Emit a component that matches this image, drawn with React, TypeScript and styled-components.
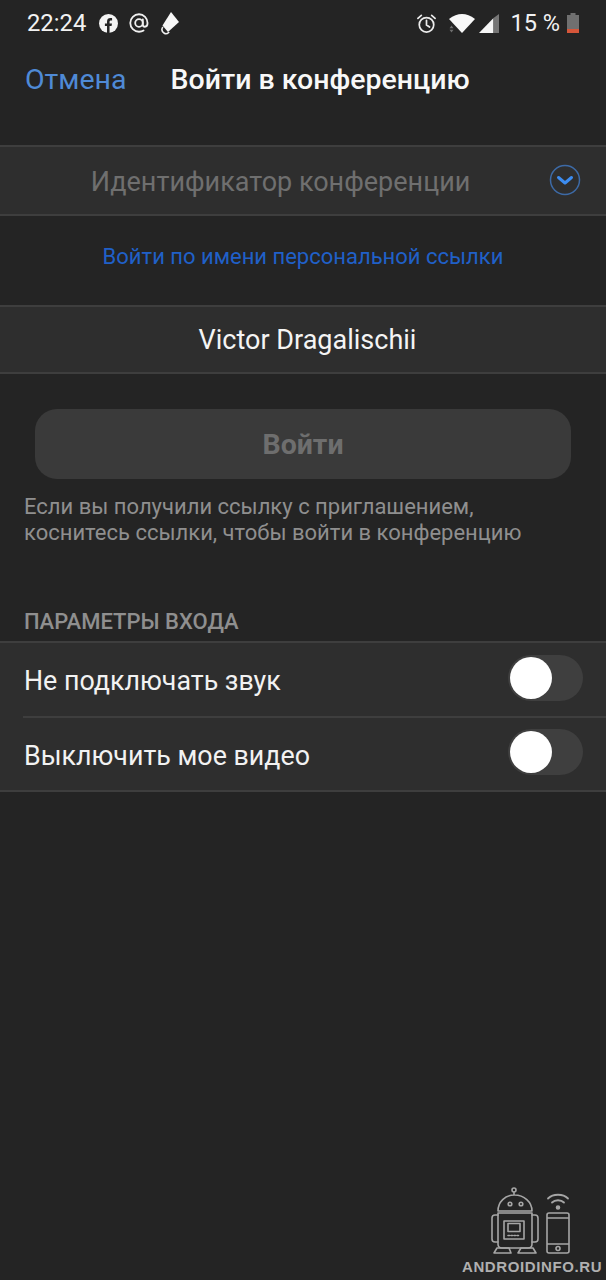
import styled, { createGlobalStyle } from "styled-components";

const GlobalStyle = createGlobalStyle`
  html, body {
    margin: 0;
    padding: 0;
    background: #242424;
  }
  * {
    box-sizing: border-box;
  }
`;

export default function App() {
  return (
    <Screen>
      <GlobalStyle />
      <StatusBar>
        <StatusLeft>
          <Clock>22:24</Clock>
          <svg width="19" height="19" viewBox="0 0 18 18">
            <circle cx="9" cy="9" r="9" fill="#f4f4f4" />
            <path d="M7.6 18v-6.6H5.6V9h2V7.2C7.6 5 8.9 3.900 10.800 3.900c.8 0 1.600.1 1.600.1v2.100h-1c-1 0-1.400.6-1.400 1.300V9h2.300l-.4 2.400h-1.900V18z" fill="#242424" />
          </svg>
          <AtIcon viewBox="0 0 22 22" fill="none" stroke="#f0f0f0" strokeWidth="2" strokeLinecap="round">
            <circle cx="11" cy="11" r="4.200" />
            <path d="M15.200 7v5.600c0 1.600 1 2.500 2.300 2.500s2.900-1.100 2.900-4.100C20.400 5.700 16.200 1.400 11 1.400 5.700 1.400 1.400 5.700 1.400 11s4.300 9.600 9.600 9.600c2 0 3.600-.5 5-1.400" />
          </AtIcon>
          <svg width="18" height="23" viewBox="0 0 18 23">
            <path d="M10 0 18 10 7 20 1.500 13.500z" fill="#f8f8f8" />
            <path d="M1.500 15.500c-1 2-.4 4.500 1.800 5.800 1.500.9 3 .5 4.400-.8" fill="none" stroke="#f0f0f0" strokeWidth="1.600" strokeLinecap="round" />
          </svg>
        </StatusLeft>
        <StatusRight>
          <svg width="21" height="21" viewBox="0 0 22 22" fill="none" stroke="#ececec" strokeWidth="1.800" strokeLinecap="round">
            <circle cx="11" cy="12.400" r="7.600" />
            <path d="M11 7.600v5l3.200 2.100M2 5.600 5.600 2.400M20 5.600l-3.600-3.200" />
          </svg>
          <SignalPair>
            <svg width="26" height="19" viewBox="0 0 26 19">
              <path d="M0 5Q13-5 26 5L13 19z" fill="#f8f8f8" />
              <path d="M2.500 11.500 4.500 14.300H.5zM2.500 18.500 4.500 15.700H.5z" fill="#6f6f6f" />
            </svg>
            <svg width="20" height="19" viewBox="0 0 20 19">
              <path d="M0 19 14.500 4V19z" fill="#f6f6f6" />
              <path d="M14.500 4 20 0V19H14.500z" fill="#767676" />
            </svg>
          </SignalPair>
          <BatteryPair>
            <BatteryText>15 %</BatteryText>
            <svg width="12" height="20" viewBox="0 0 12 20">
              <path d="M3.500 0h5v2H12v18H0V2h3.500z" fill="#707070" />
              <path d="M0 16h12v4H0z" fill="#d6563a" />
            </svg>
          </BatteryPair>
        </StatusRight>
      </StatusBar>

      <NavBar>
        <CancelLink>Отмена</CancelLink>
        <NavTitle>Войти в конференцию</NavTitle>
      </NavBar>

      <InputRow>
        <Placeholder>Идентификатор конференции</Placeholder>
        <DropdownIcon viewBox="0 0 32 32" fill="none">
          <circle cx="16" cy="16" r="14.500" stroke="#3d6aa6" strokeWidth="1.500" />
          <path d="M9.500 13.500 16 19l6.500-5.500" stroke="#3c8cf0" strokeWidth="3" strokeLinecap="round" strokeLinejoin="round" />
        </DropdownIcon>
      </InputRow>

      <LinkRow>Войти по имени персональной ссылки</LinkRow>

      <NameRow>Victor Dragalischii</NameRow>

      <JoinButton>Войти</JoinButton>

      <HelpText>
        Если вы получили ссылку с приглашением,
        <br />
        коснитесь ссылки, чтобы войти в конференцию
      </HelpText>

      <SectionTitle>ПАРАМЕТРЫ ВХОДА</SectionTitle>

      <OptionList>
        <OptionRow>
          <OptionLabel>Не подключать звук</OptionLabel>
          <Toggle>
            <Knob />
          </Toggle>
        </OptionRow>
        <OptionRow>
          <OptionLabel>Выключить мое видео</OptionLabel>
          <Toggle>
            <Knob />
          </Toggle>
        </OptionRow>
      </OptionList>

      <Watermark>
        <WatermarkArt viewBox="0 0 82 70" fill="none" stroke="#a6a6a6" strokeWidth="1.600" strokeLinecap="round" strokeLinejoin="round">
          <circle cx="24" cy="5" r="2" />
          <path d="M24 7v3M8 26c0-9 7-16 16.500-16S42 17 42 26z" />
          <circle cx="20" cy="19" r="1.800" />
          <circle cx="31" cy="19" r="1.800" />
          <path d="M8 28h34v31c0 2.500-1.500 4-4 4H12c-2.500 0-4-1.500-4-4z" />
          <path d="M8 30H5c-2 0-3 1-3 3v21c0 2 1 3 3 3h3M42 30h3c2 0 3 1 3 3v21c0 2-1 3-3 3h-3" />
          <path d="M14 36h20v18H14zM18 38.500h12v8H18z" />
          <path d="M18 50.500h12" strokeDasharray="1.500 1.500" />
          <path d="M7 63h12l2 5H4zM31 63h12l3 5H28z" />
          <path d="M59 28h18c1.500 0 2 .8 2 2v36c0 1.200-.5 2-2 2H59c-1.500 0-2-.8-2-2V30c0-1.200.5-2 2-2zM57 33h22M57 59h22" />
          <circle cx="68" cy="63.500" r="2" />
          <path d="M58 13.500c5-5 15-5 20 0M62 17.500c3-3 9-3 12 0" strokeWidth="1.800" />
          <circle cx="68" cy="22.500" r="1.500" fill="#a6a6a6" />
        </WatermarkArt>
        <WatermarkText>ANDROIDINFO.RU</WatermarkText>
      </Watermark>
    </Screen>
  );
}

const Screen = styled.div`
  position: relative;
  width: 606px;
  height: 1280px;
  overflow: hidden;
  background: #242424;
  font-family: Roboto, "Noto Sans", sans-serif;
  color: #f2f2f2;
`;

const StatusBar = styled.div`
  height: 46px;
  padding: 0 27px;
  display: flex;
  justify-content: space-between;
  align-items: center;
`;

const StatusLeft = styled.div`
  display: flex;
  align-items: center;
  gap: 11px;
`;

const StatusRight = styled.div`
  display: flex;
  align-items: center;
  gap: 12px;
`;

const SignalPair = styled.div`
  display: flex;
  align-items: center;
  gap: 4px;
`;

const BatteryPair = styled.div`
  display: flex;
  align-items: center;
  gap: 7px;
`;

const Clock = styled.span`
  font-size: 23.800px;
  margin-right: 2px;
`;

const AtIcon = styled.svg`
  width: 20px;
  height: 20px;
  margin-right: 1px;
`;

const BatteryText = styled.span`
  font-size: 23.500px;
`;

const NavBar = styled.div`
  height: 66px;
  padding: 0 25px;
  display: flex;
  align-items: center;
  gap: 44px;
`;

const CancelLink = styled.span`
  font-size: 28.500px;
  color: #4f8ad6;
`;

const NavTitle = styled.span`
  font-size: 28.500px;
  font-weight: 500;
  color: #f8f8f8;
`;

const InputRow = styled.div`
  position: relative;
  margin-top: 33px;
  height: 71px;
  padding-top: 3px;
  background: #2e2e2e;
  border-top: 2px solid #3e3e3e;
  border-bottom: 2px solid #3e3e3e;
  display: flex;
  align-items: center;
  justify-content: center;
`;

const Placeholder = styled.span`
  font-size: 27px;
  color: #6f6f6f;
  margin-right: 45px;
`;

const DropdownIcon = styled.svg`
  position: absolute;
  right: 25px;
  top: 17px;
  width: 32px;
  height: 32px;
`;

const LinkRow = styled.div`
  height: 89px;
  padding-bottom: 8px;
  display: flex;
  align-items: center;
  justify-content: center;
  font-size: 22px;
  color: #2060c8;
`;

const NameRow = styled.div`
  height: 69px;
  padding-left: 9px;
  background: #2e2e2e;
  border-top: 2px solid #3e3e3e;
  border-bottom: 2px solid #3e3e3e;
  display: flex;
  align-items: center;
  justify-content: center;
  font-size: 27px;
  color: #f4f4f4;
`;

const JoinButton = styled.div`
  margin: 35px 35px 0;
  height: 70px;
  padding-top: 1px;
  border-radius: 22px;
  background: #3a3a3a;
  display: flex;
  align-items: center;
  justify-content: center;
  font-size: 28.500px;
  font-weight: 700;
  color: #6e6e6e;
`;

const HelpText = styled.p`
  margin: 15px 24px 0;
  font-size: 22px;
  line-height: 26px;
  color: #8f8f8f;
`;

const SectionTitle = styled.div`
  margin: 64px 24px 0;
  height: 24px;
  line-height: 24px;
  font-size: 22px;
  font-weight: 500;
  color: #8f8f8f;
`;

const OptionList = styled.div`
  margin-top: 7px;
  background: #2e2e2e;
  border-top: 2px solid #3e3e3e;
  border-bottom: 2px solid #3e3e3e;
`;

const OptionRow = styled.div`
  height: 73px;
  margin-left: 23px;
  padding: 0 23px 0 1px;
  display: flex;
  align-items: center;
  justify-content: space-between;
  & + & {
    height: 74px;
    border-top: 2px solid #3e3e3e;
  }
`;

const OptionLabel = styled.span`
  padding-top: 3px;
  font-size: 26.800px;
  color: #f2f2f2;
`;

const Toggle = styled.div`
  width: 75px;
  height: 46px;
  margin-bottom: 4px;
  padding: 2px;
  border-radius: 23px;
  background: #3f3f3f;
`;

const Knob = styled.div`
  width: 42px;
  height: 42px;
  border-radius: 50%;
  background: #ffffff;
`;

const Watermark = styled.div`
  position: absolute;
  right: 6px;
  bottom: 4px;
  width: 138px;
  display: flex;
  flex-direction: column;
  align-items: flex-start;
`;

const WatermarkArt = styled.svg`
  width: 82px;
  height: 70px;
  margin-left: 28px;
`;

const WatermarkText = styled.span`
  margin-top: 3px;
  font-family: "Liberation Sans", sans-serif;
  font-size: 15px;
  line-height: 18px;
  font-weight: 700;
  letter-spacing: 0.600px;
  color: #b0b0b0;
  white-space: nowrap;
`;
